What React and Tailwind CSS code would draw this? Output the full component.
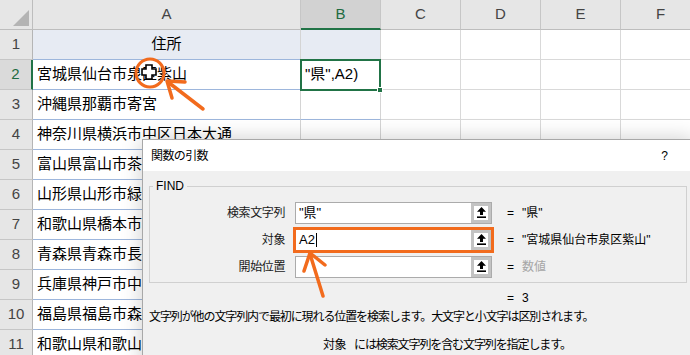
import React from "react";

const rows = [
  { n: 1, a: "住所" },
  { n: 2, a: "宮城県仙台市泉区紫山", b: '"県",A2)' },
  { n: 3, a: "沖縄県那覇市寄宮" },
  { n: 4, a: "神奈川県横浜市中区日本大通" },
  { n: 5, a: "富山県富山市茶" },
  { n: 6, a: "山形県山形市緑" },
  { n: 7, a: "和歌山県橋本市" },
  { n: 8, a: "青森県青森市長" },
  { n: 9, a: "兵庫県神戸市中" },
  { n: 10, a: "福島県福島市森" },
  { n: 11, a: "和歌山県和歌山" },
];

function UpIcon() {
  return (
    <svg width="9" height="11" viewBox="0 0 9 11" className="block">
      <path d="M4.5 0 L9 4.8 L6 4.8 L6 8 L3 8 L3 4.8 L0 4.8 Z" fill="#000" />
      <rect x="0" y="9.4" width="9" height="1.6" fill="#000" />
    </svg>
  );
}

function Field({ children, orange }) {
  return (
    <div
      className={
        orange
          ? "flex h-[22px] w-[197px] border border-[#ababab] bg-white outline-[3px] outline-solid outline-[#f26b1d] outline-offset-[-1px]"
          : "flex h-[22px] w-[197px] border border-[#ababab] bg-white"
      }
    >
      <div className="flex flex-1 items-center px-[3px] text-[13px] leading-none text-black">{children}</div>
      <div className="flex h-full w-[20px] items-center justify-center border-[3px] border-[#c3c3c3] bg-white">
        <UpIcon />
      </div>
    </div>
  );
}

function ArgRow({ label, value, valueClass, orange, children }) {
  return (
    <div className="flex h-[27px] items-center">
      <div className="w-[135px] text-right text-[12px] tracking-[-0.4px] text-[#1a1a1a]">{label}</div>
      <div className="ml-[10px]">
        <Field orange={orange}>{children}</Field>
      </div>
      <div className="ml-[15px] w-[15px] text-[12px] text-black">=</div>
      <div className={valueClass}>{value}</div>
    </div>
  );
}

export default function App() {
  return (
    <div className="relative h-[355px] w-[690px] overflow-hidden bg-white font-['Liberation_Sans','Noto_Sans_CJK_JP',sans-serif]">
      <div className="grid w-[701px] grid-cols-[33px_268px_80px_80px_80px_80px_80px] auto-rows-[30px]">
        <div className="border-b border-r border-[#bdbdbd] bg-[#e6e6e6]">
          <svg width="32" height="29" className="block">
            <polygon points="29,10 29,26 13,26" fill="#b4b4b4" />
          </svg>
        </div>
        {["A", "B", "C", "D", "E", "F"].map((c) =>
          c === "B" ? (
            <div
              key={c}
              className="flex items-center justify-center border-r border-r-[#c6c6c6] border-b-2 border-b-[#217346] bg-[#d2d2d2] text-[15px] text-[#1e6b41]"
            >
              {c}
            </div>
          ) : (
            <div
              key={c}
              className="flex items-center justify-center border-r border-b border-r-[#c6c6c6] border-b-[#bdbdbd] bg-[#e6e6e6] text-[15px] text-[#444]"
            >
              {c}
            </div>
          )
        )}
        {rows.map((r) => (
          <React.Fragment key={r.n}>
            {r.n === 2 ? (
              <div className="flex items-center justify-center border-b border-b-[#c6c6c6] border-r-2 border-r-[#217346] bg-[#dadada] text-[15px] text-[#1e6b41]">
                {r.n}
              </div>
            ) : (
              <div className="flex items-center justify-center border-b border-r border-b-[#c6c6c6] border-r-[#b5b5b5] bg-[#e6e6e6] text-[15px] text-[#444]">
                {r.n}
              </div>
            )}
            {r.n === 1 ? (
              <div className="flex items-center justify-center border-b border-r border-b-[#9db6dc] border-r-[#d4d4d4] bg-[#e7ebf3] text-[15px] text-black">
                {r.a}
              </div>
            ) : (
              <div className="flex items-center overflow-hidden whitespace-nowrap border-b border-r border-b-[#9db6dc] border-r-[#d4d4d4] px-[4px] text-[15px] text-black">
                {r.a}
              </div>
            )}
            {r.n === 1 ? (
              <div className="border-b border-r border-b-[#9db6dc] border-r-[#d4d4d4] bg-[#e7ebf3]" />
            ) : r.n === 2 ? (
              <div className="relative flex items-center whitespace-nowrap border-b border-r border-b-[#9db6dc] border-r-[#d4d4d4] px-[4px] text-[15px] text-black">
                {r.b}
                <div className="absolute -left-[1px] -top-[1px] h-[32px] w-[81px] border-2 border-[#217346]" />
                <div className="absolute -bottom-[4px] -right-[3px] h-[6px] w-[6px] border border-white bg-[#217346]" />
              </div>
            ) : (
              <div className="border-b border-r border-b-[#9db6dc] border-r-[#d4d4d4]" />
            )}
            <div className="border-b border-r border-[#d9d9d9]" />
            <div className="border-b border-r border-[#d9d9d9]" />
            <div className="border-b border-r border-[#d9d9d9]" />
            <div className="border-b border-r border-[#d9d9d9]" />
          </React.Fragment>
        ))}
      </div>

      {/* Dialog */}
      <div className="absolute left-[142px] top-[139px] flex h-[240px] w-[552px] flex-col border border-[#a8a8a8] bg-[#f0f0f0] shadow-[0_0_20px_rgba(0,0,0,0.2)]">
        <div className="flex h-[31px] items-center justify-between bg-white pl-[8px] pr-[25px] text-[12px] text-black">
          <span className="tracking-[-0.6px]">関数の引数</span>
          <span>?</span>
        </div>
        <div className="flex flex-col px-[6px] pt-[8px]">
          <fieldset className="border border-[#d0d0d0] pb-[2px] pt-[6px]">
            <legend className="ml-[3px] px-[3px] text-[12px] leading-[14px] text-black">FIND</legend>
            <ArgRow label="検索文字列" value={'"県"'} valueClass="text-[12px] text-black">
              {'"県"'}
            </ArgRow>
            <ArgRow label="対象" value={'"宮城県仙台市泉区紫山"'} valueClass="text-[12px] text-black" orange>
              <span>A2</span>
              <span className="ml-[1px] h-[14px] w-[1px] bg-black" />
            </ArgRow>
            <ArgRow label="開始位置" value="数値" valueClass="text-[12px] text-[#a6a6a6]" />
          </fieldset>
          <div className="mt-[7px] flex h-[16px] items-center text-[12px] text-black">
            <span className="ml-[358px] w-[15px]">=</span>
            <span>3</span>
          </div>
          <div className="mt-[3px] flex h-[16px] items-center whitespace-nowrap text-[12px] tracking-[-1.1px] text-black">
            文字列が他の文字列内で最初に現れる位置を検索します。大文字と小文字は区別されます。
          </div>
          <div className="mt-[12px] flex h-[16px] items-center whitespace-nowrap pl-[174px] text-[12px] text-black">
            <span className="tracking-[-0.5px]">対象</span>
            <span className="ml-[8px] tracking-[-1.1px]">には検索文字列を含む文字列を指定します。</span>
          </div>
        </div>
      </div>

      {/* Annotations */}
      <svg className="pointer-events-none absolute left-0 top-0" width="690" height="355" viewBox="0 0 690 355">
        <circle cx="150" cy="73" r="14" fill="none" stroke="#f26b1d" strokeWidth="3" />
        <path
          d="M146 65 h6 v4 h4 v6 h-4 v4 h-6 v-4 h-4 v-6 h4 z"
          fill="#fff"
          stroke="#000"
          strokeWidth="1.6"
          strokeLinejoin="miter"
        />
        <g stroke="#f26b1d" strokeWidth="3.5" strokeLinecap="round" strokeLinejoin="round" fill="none">
          <line x1="203" y1="109" x2="168" y2="82" />
          <polyline points="185,82 167,81 172,98" />
          <line x1="323" y1="296" x2="310" y2="254" />
          <polyline points="325,265 310,253 304,271" />
        </g>
      </svg>
    </div>
  );
}
